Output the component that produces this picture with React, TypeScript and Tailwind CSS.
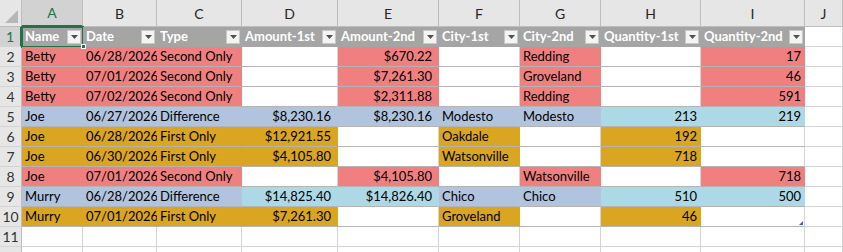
import React from "react";

type Fill = "pink" | "gold" | "steel" | "sky" | "none";

const fillClass: Record<Fill, string> = {
  pink: "bg-[#f08080] border-r-[#f08080]",
  gold: "bg-[#daa520] border-r-[#daa520]",
  steel: "bg-[#b0c4de] border-r-[#b0c4de]",
  sky: "bg-[#add8e6] border-r-[#add8e6]",
  none: "bg-white border-r-[#d4d4d4]",
};

const grid =
  "grid grid-cols-[22px_61px_74px_85px_96px_101px_81px_81px_100px_104px_1fr]";

const headers = [
  "Name",
  "Date",
  "Type",
  "Amount-1st",
  "Amount-2nd",
  "City-1st",
  "City-2nd",
  "Quantity-1st",
  "Quantity-2nd",
];

const letters = ["A", "B", "C", "D", "E", "F", "G", "H", "I", "J"];

type Row = { kind: "S" | "F" | "D"; cells: string[]; diff?: number[] };

const rows: Row[] = [
  { kind: "S", cells: ["Betty", "06/28/2026", "Second Only", "", "$670.22", "", "Redding", "", "17"] },
  { kind: "S", cells: ["Betty", "07/01/2026", "Second Only", "", "$7,261.30", "", "Groveland", "", "46"] },
  { kind: "S", cells: ["Betty", "07/02/2026", "Second Only", "", "$2,311.88", "", "Redding", "", "591"] },
  { kind: "D", cells: ["Joe", "06/27/2026", "Difference", "$8,230.16", "$8,230.16", "Modesto", "Modesto", "213", "219"], diff: [7, 8] },
  { kind: "F", cells: ["Joe", "06/28/2026", "First Only", "$12,921.55", "", "Oakdale", "", "192", ""] },
  { kind: "F", cells: ["Joe", "06/30/2026", "First Only", "$4,105.80", "", "Watsonville", "", "718", ""] },
  { kind: "S", cells: ["Joe", "07/01/2026", "Second Only", "", "$4,105.80", "", "Watsonville", "", "718"] },
  { kind: "D", cells: ["Murry", "06/28/2026", "Difference", "$14,825.40", "$14,826.40", "Chico", "Chico", "510", "500"], diff: [3, 4, 7, 8] },
  { kind: "F", cells: ["Murry", "07/01/2026", "First Only", "$7,261.30", "", "Groveland", "", "46", ""] },
];

function fillFor(row: Row, col: number): Fill {
  if (row.kind === "S") return col < 3 || col % 2 === 0 ? "pink" : "none";
  if (row.kind === "F") return col < 4 || col % 2 === 1 ? "gold" : "none";
  return row.diff?.includes(col) ? "sky" : "steel";
}

function FilterButton() {
  return (
    <span className="ml-auto mr-[2px] flex h-[14px] w-[14px] shrink-0 items-center justify-center border border-[#c8c8c8] bg-[#f4f4f4]">
      <svg width="7" height="4" viewBox="0 0 7 4">
        <path d="M0 0h7L3.5 4z" fill="#505050" />
      </svg>
    </span>
  );
}

function RowHead({ n, active }: { n?: number; active?: boolean }) {
  return (
    <div
      className={
        "flex items-center justify-center border-b border-b-[#d4d4d4] text-[14px] " +
        (active
          ? "border-r-2 border-r-[#217346] bg-[#d2d2d2] text-[#217346]"
          : "border-r border-r-[#bdbdbd] bg-[#e6e6e6] text-[#333]")
      }
    >
      {n}
    </div>
  );
}

export default function App() {
  return (
    <div className="h-[252px] w-[843px] overflow-hidden bg-white text-[13px] leading-none text-black [font-family:Lato,'Liberation_Sans',sans-serif]">
      {/* column letters */}
      <div className={grid + " h-[27px]"}>
        <div className="relative border-b border-r border-[#bdbdbd] bg-[#e6e6e6]">
          <svg className="absolute bottom-[3px] right-[3px]" width="13" height="13" viewBox="0 0 13 13">
            <path d="M13 0V13H0z" fill="#b7b7b7" />
          </svg>
        </div>
        {letters.map((l, i) => (
          <div
            key={l}
            className={
              "flex items-end justify-center pb-[5px] text-[14px] " +
              (i === 0
                ? "border-b-2 border-r border-b-[#217346] border-r-[#bdbdbd] bg-[#d2d2d2] text-[#217346]"
                : "border-b border-r border-[#bdbdbd] bg-[#e6e6e6] text-[#262626]")
            }
          >
            {l}
          </div>
        ))}
      </div>

      {/* table header */}
      <div className={grid + " h-[20px]"}>
        <RowHead n={1} active />
        {headers.map((h, i) => (
          <div
            key={h}
            className={
              "relative flex items-center border-b border-b-[#a5a5a5] bg-[#a5a5a5] pl-[3px] font-bold text-white " +
              (i === 0 ? "outline-2 -outline-offset-1 outline-[#217346] outline" : "")
            }
          >
            <span className="whitespace-nowrap">{h}</span>
            <FilterButton />
            {i === 0 && (
              <span className="absolute -bottom-[3px] -right-[3px] z-10 h-[5px] w-[5px] border border-white bg-[#217346]" />
            )}
          </div>
        ))}
        <div className="border-b border-r border-[#d4d4d4]" />
      </div>

      {/* data rows */}
      {rows.map((row, r) => (
        <div key={r} className={grid + " h-[20px]"}>
          <RowHead n={r + 2} />
          {row.cells.map((c, i) => {
            const right = i >= 3 && (i <= 4 || i >= 7);
            const money = i === 3 || i === 4;
            return (
              <div
                key={i}
                className={
                  "relative flex items-center whitespace-nowrap border-b border-r border-b-[#b4b4b4] " +
                  fillClass[fillFor(row, i)] +
                  (right ? (money ? " justify-end pr-[6px]" : " justify-end pr-[3px]") : " pl-[3px]")
                }
              >
                {c}
                {r === rows.length - 1 && i === 8 && (
                  <svg className="absolute bottom-[1px] right-[1px]" width="4" height="4" viewBox="0 0 4 4">
                    <path d="M4 0V4H0z" fill="#3b5fc4" />
                  </svg>
                )}
              </div>
            );
          })}
          <div className="border-b border-r border-[#d4d4d4]" />
        </div>
      ))}

      {/* empty rows; row 12 is cut off by the window */}
      {[11, 12].map((n) => (
        <div key={n} className={grid + " h-[20px]"}>
          <RowHead n={n === 11 ? n : undefined} />
          {letters.map((l) => (
            <div key={l} className="border-b border-r border-[#d4d4d4]" />
          ))}
        </div>
      ))}
    </div>
  );
}
